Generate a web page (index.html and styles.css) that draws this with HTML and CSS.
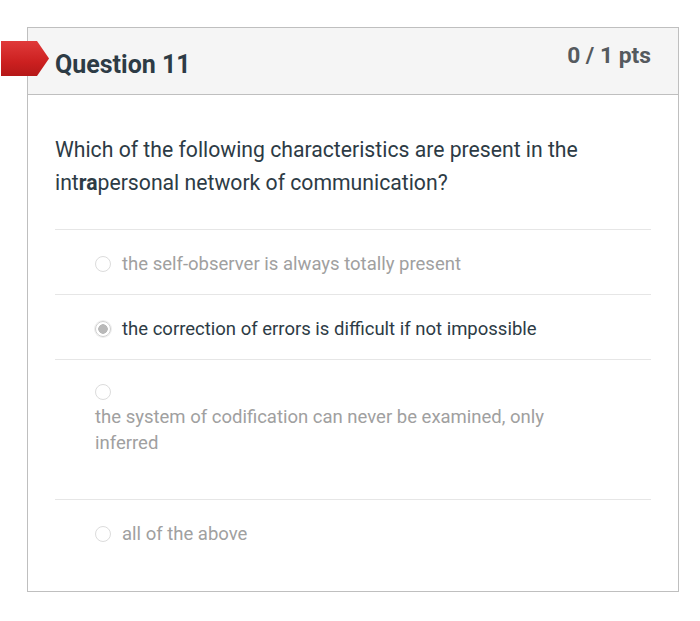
FILE: index.html
```html
<!DOCTYPE html>
<html lang="en">
<head>
<meta charset="utf-8">
<title>Question 11</title>
<link rel="stylesheet" href="styles.css">
</head>
<body>
<div class="page">
  <section class="question">
    <span class="flag" aria-hidden="true"></span>
    <header class="q-header">
      <h2 class="q-title">Question 11</h2>
      <span class="q-points">0 / 1 pts</span>
    </header>
    <div class="q-body">
      <p class="q-text">Which of the following characteristics are present in the int<strong>ra</strong>personal network of communication?</p>
      <ul class="answers">
        <li class="answer">
          <span class="radio"></span>
          <span class="a-text">the self-observer is always totally present</span>
        </li>
        <li class="answer selected">
          <span class="radio"></span>
          <span class="a-text">the correction of errors is difficult if not impossible</span>
        </li>
        <li class="answer stacked">
          <span class="radio"></span>
          <span class="a-text">the system of codification can never be examined, only inferred</span>
        </li>
        <li class="answer">
          <span class="radio"></span>
          <span class="a-text">all of the above</span>
        </li>
      </ul>
    </div>
  </section>
</div>
</body>
</html>
```

FILE: styles.css
```css
* { box-sizing: border-box; }
html, body { margin: 0; padding: 0; background: #ffffff; }
body {
  font-family: Roboto, "Liberation Sans", Arial, sans-serif;
  color: #2d3b45;
}
.page {
  padding: 27px 21px 30px 27px;
}
.question {
  position: relative;
  border: 1px solid #bfbfbf;
  background: #fff;
}
.flag {
  position: absolute;
  left: -27px;
  top: 13px;
  width: 48px;
  height: 35px;
  background: linear-gradient(180deg, #e03a3a 0%, #cc2020 60%, #b51818 100%);
  clip-path: polygon(0 0, 36px 0, 48px 50%, 36px 100%, 0 100%);
}
.q-header {
  display: flex;
  justify-content: space-between;
  align-items: flex-start;
  height: 67px;
  padding: 0 27px 0 27px;
  background: #f5f5f5;
  border-bottom: 1px solid #bfbfbf;
}
.q-title {
  margin: 20px 0 0 0;
  font-size: 25px;
  line-height: 34px;
  font-weight: 700;
  color: #2d3b45;
}
.q-points {
  margin-top: 13px;
  font-size: 22.8px;
  line-height: 30px;
  font-weight: 700;
  color: #555a5e;
}
.q-body {
  padding: 38px 27px 27px 27px;
}
.q-text {
  margin: 0 0 30px 0;
  font-size: 21.2px;
  line-height: 33px;
}
.q-text strong { font-weight: 700; }
.answers {
  list-style: none;
  margin: 0;
  padding: 0;
}
.answer {
  display: flex;
  align-items: center;
  gap: 11px;
  height: 65px;
  padding-left: 40px;
  padding-top: 3px;
  border-top: 1px solid #e6e6e6;
  font-size: 18.5px;
  line-height: 26px;
  color: #a0a0a0;
}
.answer.selected { color: #2d3b45; }
.radio {
  flex: none;
  width: 16px;
  height: 16px;
  border-radius: 50%;
  border: 1px solid #dcdcdc;
  background: #fff;
}
.selected .radio {
  border: 1px solid #d0d0d0;
  background: radial-gradient(circle, #b9b9b9 0 4.5px, #fff 5px);
  box-shadow: 0 0 0 1px #eeeeee;
}
.answer.stacked {
  flex-direction: column;
  align-items: flex-start;
  gap: 4px;
  height: 140px;
  padding-top: 24px;
  padding-right: 90px;
}
```
